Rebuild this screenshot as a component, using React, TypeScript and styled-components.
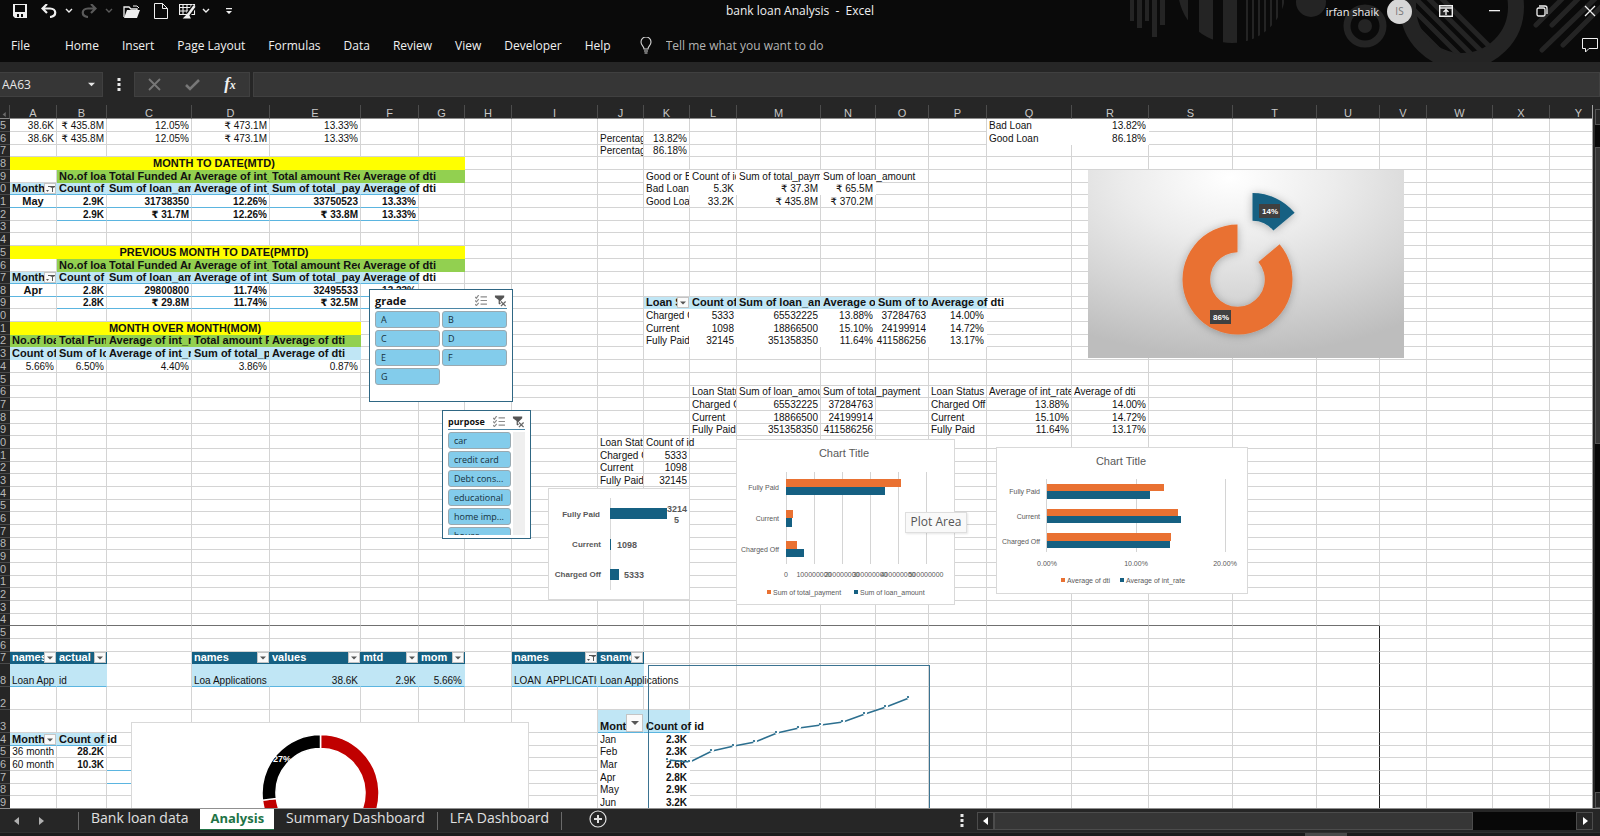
import React from "react";
import styled, { createGlobalStyle, css } from "styled-components";

const GlobalStyle = createGlobalStyle`
  * { box-sizing: border-box; }
  html, body, #root { height: 100%; }
  body { margin: 0; background: #262626; overflow: hidden; font-family: "Open Sans", "Noto Sans", sans-serif; }
  button, input { font: inherit; color: inherit; margin: 0; padding: 0; border: 0; background: none; }
`;

const teal = "#156082";
const orange = "#e97132";
const pale = "#c0e6f5";
const blueLine = "#5bb5e0";
const cellFont = '"Liberation Sans", "DejaVu Sans", sans-serif';

/* ---------- window chrome ---------- */

const Window = styled.div`
  display: flex;
  flex-direction: column;
  height: 100vh;
  overflow: hidden;
`;

const Ribbon = styled.header`
  position: relative;
  flex: none;
  height: 62px;
  background: #0a0a0a;
  color: #f0f0f0;
  font-size: 12px;
`;

const RibbonArt = styled.svg`
  position: absolute;
  top: 0;
  right: 0;
`;

const TitleBar = styled.div`
  position: relative;
  display: grid;
  grid-template-columns: 1fr auto 1fr;
  grid-template-rows: 22px;
  align-items: center;
  height: 22px;
`;

const QuickAccess = styled.div`
  display: flex;
  align-items: center;
  padding-left: 8px;
`;

const IconButton = styled.button<{ $w?: number; $dim?: boolean }>`
  display: flex;
  align-items: center;
  justify-content: center;
  flex: none;
  width: ${(p) => p.$w ?? 20}px;
  height: 20px;
  color: ${(p) => (p.$dim ? "#5a5a5a" : "#f0f0f0")};
  svg { display: block; flex: none; }
`;

const WindowTitle = styled.h1`
  margin: 0;
  font-size: 12px;
  line-height: 22px;
  font-weight: 400;
  white-space: pre;
`;

const AccountArea = styled.div`
  display: flex;
  align-items: center;
  justify-content: flex-end;
  white-space: nowrap;
`;

const UserName = styled.span`
  font-size: 11px;
  margin-right: 8px;
`;

const Avatar = styled.span`
  width: 25px;
  height: 25px;
  border-radius: 50%;
  background: #d6d6d6;
  color: #777;
  font-size: 10px;
  line-height: 25px;
  text-align: center;
  margin-right: 24px;
`;

const WindowButtons = styled.div`
  display: flex;
  align-items: center;
  gap: 28px;
`;

const MenuBar = styled.nav`
  position: relative;
  display: flex;
  align-items: center;
  gap: 23px;
  height: 40px;
  padding: 6px 0 0 11px;
`;

const MenuItem = styled.button<{ $wide?: boolean }>`
  margin-right: ${(p) => (p.$wide ? 12 : 0)}px;
  white-space: nowrap;
`;

const TellMe = styled.label`
  display: flex;
  align-items: center;
  gap: 14px;
  margin-left: 6px;
  flex: 1;
  input { width: 200px; outline: 0; }
  input::placeholder { color: #b4b4b4; opacity: 1; }
`;

const FormulaRow = styled.div`
  display: flex;
  flex: none;
  padding: 10px 0 8px;
  height: 43px;
  background: #262626;
  color: #e6e6e6;
`;

const NameBox = styled.div`
  display: flex;
  align-items: center;
  width: 103px;
  background: #363636;
  border: 1px solid #404040;
  border-left: 0;
  input { width: 88px; padding-left: 2px; font-size: 12px; outline: 0; }
  button { display: flex; }
`;

const FormulaDots = styled.div`
  display: flex;
  align-items: center;
  justify-content: center;
  width: 31px;
`;

const FormulaTools = styled.div`
  display: flex;
  align-items: center;
  justify-content: space-around;
  width: 116px;
  background: #363636;
  border: 1px solid #404040;
`;

const FormulaInput = styled.input`
  flex: 1;
  margin-left: 3px;
  background: #363636;
  border: 1px solid #404040;
  outline: 0;
`;

const FxMark = styled.span`
  font-family: "Liberation Serif", serif;
  font-style: italic;
  font-weight: 700;
  font-size: 17px;
  line-height: 18px;
  small { font-size: 12px; }
`;

/* ---------- worksheet ---------- */

const Workspace = styled.div`
  display: flex;
  flex: 1;
  min-height: 0;
  background: #262626;
`;

const Sheet = styled.main`
  position: relative;
  flex: 1;
  min-width: 0;
  overflow: hidden;
  background: #fff;
  border-right: 1px solid #a0a0a0;
`;

const Grid = styled.table`
  width: 100%;
  table-layout: fixed;
  border-collapse: separate;
  border-spacing: 0;
  font-family: ${cellFont};
  font-size: 10px;
  line-height: 11px;
  color: #111;
`;

const ColumnHead = styled.th`
  height: 14px;
  padding: 3px 0 0;
  background: #262626;
  border-right: 1px solid #4c4c4c;
  border-bottom: 1px solid #8a8a8a;
  color: #c8c8c8;
  font-weight: 400;
  font-size: 11px;
  line-height: 10px;
`;

const RowHead = styled.th`
  padding: 0;
  background: #262626;
  border-bottom: 1px solid #4a4a4a;
  color: #b8b8b8;
  font-weight: 400;
  font-size: 11px;
  line-height: 11px;
  text-align: left;
  vertical-align: bottom;
`;

const Row = styled.tr<{ $h: number }>`
  height: ${(p) => p.$h}px;
`;

type Look = {
  fill?: string;
  ink?: string;
  bold?: boolean;
  align?: "left" | "right" | "center";
  spill?: boolean;
  plain?: boolean;
  under?: string;
  side?: string;
};

const CellBox = styled.td<{ $look: Look }>`
  padding: 0 ${(p) => (p.$look.align === "right" ? 2 : 0)}px 0 ${(p) => (p.$look.align ? 0 : 2)}px;
  vertical-align: bottom;
  white-space: pre;
  text-align: ${(p) => p.$look.align ?? "left"};
  background: ${(p) => p.$look.fill ?? "transparent"};
  color: ${(p) => p.$look.ink ?? "inherit"};
  border-right: 1px solid ${(p) => p.$look.side ?? p.$look.fill ?? (p.$look.plain ? "#fff" : "#d4d4d4")};
  border-bottom: 1px solid ${(p) => p.$look.under ?? p.$look.fill ?? (p.$look.plain ? "#fff" : "#d4d4d4")};
  ${(p) => p.$look.bold && css`
    font-weight: 700;
    font-size: ${p.$look.align === "right" ? 10 : 11}px;
  `}
`;

const CellLine = styled.div`
  display: flex;
  align-items: flex-end;
`;

const CellText = styled.span<{ $spill?: boolean }>`
  display: block;
  flex: 1;
  min-width: 0;
  overflow-x: ${(p) => (p.$spill ? "visible" : "clip")};
`;

const FilterButton = styled.button<{ $big?: boolean }>`
  display: flex;
  align-items: center;
  justify-content: center;
  flex: none;
  width: ${(p) => (p.$big ? 17 : 12)}px;
  height: ${(p) => (p.$big ? 18 : 11)}px;
  background: #fafafa;
  border: 1px solid #c4c4c4;
`;

/* ---------- floating objects ---------- */

type Box = { $x: number; $y: number; $w: number; $h: number };

const Floating = styled.section<Box>`
  position: absolute;
  left: ${(p) => p.$x}px;
  top: ${(p) => p.$y}px;
  width: ${(p) => p.$w}px;
  height: ${(p) => p.$h}px;
`;

const ChartSvg = styled.svg`
  display: block;
  width: 100%;
  height: 100%;
  overflow: hidden;
  font-family: "Liberation Sans", sans-serif;
  fill: #595959;
`;

const SlicerFrame = styled(Floating)`
  display: flex;
  flex-direction: column;
  padding: 3px 5px;
  background: #fff;
  border: 1px solid #2f6784;
  color: #111;
`;

const SlicerHead = styled.div<{ $compact?: boolean }>`
  display: flex;
  align-items: center;
  justify-content: space-between;
  flex: none;
  height: 16px;
  border-bottom: 1px solid #4b86a6;
  h2 { margin: 0; font-size: ${(p) => (p.$compact ? 9 : 11)}px; line-height: 12px; font-weight: 700; }
  div { display: flex; gap: 7px; }
  button { display: flex; }
`;

const SlicerBody = styled.div`
  display: flex;
  flex: 1;
  min-height: 0;
  gap: 2px;
  padding-top: 2px;
`;

const SlicerList = styled.div<{ $cols: number }>`
  display: grid;
  grid-template-columns: repeat(${(p) => p.$cols}, 1fr);
  grid-auto-rows: 17px;
  align-content: start;
  gap: 2px;
  flex: 1;
  overflow: hidden;
`;

const SlicerItem = styled.button`
  padding: 0 5px;
  border: 1px solid #9aa9b0;
  border-radius: 3px;
  background: #83cceb;
  font-size: 9px;
  line-height: 13px;
  text-align: left;
  white-space: nowrap;
  color: #16313d;
`;

const SlicerTrack = styled.div`
  flex: none;
  width: 12px;
  background: #efefef;
`;

const Tooltip = styled(Floating)`
  background: #f9f9f9;
  border: 1px solid #dedede;
  color: #555;
  font-size: 12px;
  line-height: 18px;
  text-align: center;
  white-space: nowrap;
  box-shadow: 1px 1px 2px rgba(0, 0, 0, 0.1);
`;

/* ---------- scroll bars and sheet tabs ---------- */

const VerticalScroll = styled.div`
  display: flex;
  flex-direction: column;
  flex: none;
  width: 7px;
  padding: 4px 0 0 2px;
  background: #262626;
`;

const VButton = styled.button`
  flex: none;
  height: 16px;
  background: #262626;
  border: 1px solid #555;
  border-right: 0;
`;

const VTrack = styled.div`
  flex: 1;
  padding-top: 22px;
  background: #080808;
`;

const VThumb = styled.div`
  height: 46%;
  background: #363636;
  border: 1px solid #555;
  border-right: 0;
`;

const BottomBar = styled.footer`
  display: flex;
  flex: none;
  height: 24px;
  border-top: 1px solid #909090;
  background: #262626;
  color: #e0e0e0;
`;

const TabArrows = styled.div`
  display: flex;
  align-items: center;
  gap: 4px;
  width: 78px;
  padding-left: 7px;
`;

const Divider = styled.span<{ $right?: number }>`
  flex: none;
  width: 1px;
  height: 18px;
  margin: 3px ${(p) => p.$right ?? 0}px 0 0;
  background: #6a6a6a;
`;

const SheetTab = styled.button<{ $active?: boolean }>`
  height: 21px;
  padding: 0 12px 4px;
  font-size: 14px;
  line-height: 16px;
  white-space: nowrap;
  ${(p) => p.$active && css`
    padding: 0 10px 3px;
    background: #fff;
    color: #217346;
    font-size: 13px;
    font-weight: 700;
    border-bottom: 1px solid #217346;
  `}
`;

const HScroll = styled.div`
  display: flex;
  width: 616px;
  height: 18px;
  margin: 3px 7px 0 0;
  background: #080808;
  flex: none;
`;

const HButton = styled.button`
  display: flex;
  align-items: center;
  justify-content: center;
  flex: none;
  width: 17px;
  background: #262626;
  border: 1px solid #4c4c4c;
`;

const HThumb = styled.div`
  width: 479px;
  background: #363636;
  border: 1px solid #4c4c4c;
`;

const Spacer = styled.span`
  flex: 1;
`;

const StatusEdge = styled.div`
  display: flex;
  flex: none;
  height: 4px;
  background: #1c1c1c;
  border-top: 1px solid #303030;
  justify-content: flex-end;
  padding-right: 253px;
`;

const StatusMark = styled.span`
  width: 42px;
  background: #4a4a4a;
`;

/* ---------- data ---------- */

const columns: [string, number?][] = [
  ["A", 47], ["B", 50], ["C", 85], ["D", 78], ["E", 91], ["F", 58], ["G", 46], ["H", 47], ["I", 86],
  ["J", 46], ["K", 46], ["L", 47], ["M", 84], ["N", 55], ["O", 53], ["P", 58], ["Q", 85], ["R", 77],
  ["S", 84], ["T", 84], ["U", 63], ["V", 47], ["W", 66], ["X", 57], ["Y", 58], ["Z"],
];
const letters = columns.map((c) => c[0]);

const rowHeights = [
  13, 13, 12, 13, 13, 12, 13, 13, 12, 13, 13, 13, 12, 13, 12, 13, 13, 12, 13, 13, 13, 12, 13, 13, 12, 13,
  13, 12, 13, 13, 12, 13, 13, 12, 13, 13, 12, 13, 13, 12, 13, 13, 12, 23, 23, 23, 13, 12, 13, 13, 12, 13,
];
const rowDigits = "5678901234567890123456789012345678901234567823456789";

type Cell = Look & { value?: string; span?: number; filter?: "list" | "funnel"; big?: boolean };
const cells: Record<string, Cell> = {};

function put(row: number, start: string, values: string[], look: Cell = {}) {
  const first = letters.indexOf(start);
  values.forEach((value, i) => {
    const key = `${letters[first + i]}${row}`;
    cells[key] = { ...cells[key], ...look, value };
  });
}
function shade(row: number, from: string, to: string, look: Cell) {
  for (let c = letters.indexOf(from); c <= letters.indexOf(to); c++) {
    const key = `${letters[c]}${row}`;
    cells[key] = { ...cells[key], ...look };
  }
}
const num: Cell = { align: "right" };
const boldNum: Cell = { align: "right", bold: true };
const yellow = "#ffff00";
const green = "#92d050";

put(0, "A", ["38.6K", "₹ 435.8M", "12.05%", "₹ 473.1M", "13.33%"], num);
put(1, "A", ["38.6K", "₹ 435.8M", "12.05%", "₹ 473.1M", "13.33%"], num);

function monthBlock(top: number, title: string, month: string, first: string[], second: string[]) {
  put(top, "A", [title], { span: 6, bold: true, align: "center", fill: yellow });
  shade(top, "G", "G", { fill: yellow });
  put(top + 1, "B", ["No.of loan", "Total Funded Amount", "Average of int_rate", "Total amount Received", "Average of dti"], { bold: true });
  shade(top + 1, "B", "G", { fill: green });
  put(top + 2, "A", ["Month", "Count of id", "Sum of loan_amount", "Average of int_rate", "Sum of total_payment", "Average of dti"], { bold: true });
  shade(top + 2, "A", "F", { fill: pale, under: blueLine });
  cells[`A${top + 2}`].filter = "funnel";
  cells[`F${top + 1}`].spill = true;
  cells[`F${top + 2}`].spill = true;
  put(top + 3, "A", [month], { bold: true, align: "center" });
  put(top + 3, "B", first, boldNum);
  shade(top + 3, "A", "F", { under: blueLine });
  put(top + 4, "B", second, boldNum);
  shade(top + 4, "B", "F", { under: blueLine });
}
monthBlock(3, "MONTH TO DATE(MTD)", "May", ["2.9K", "31738350", "12.26%", "33750523", "13.33%"], ["2.9K", "₹ 31.7M", "12.26%", "₹ 33.8M", "13.33%"]);
monthBlock(10, "PREVIOUS MONTH TO DATE(PMTD)", "Apr", ["2.8K", "29800800", "11.74%", "32495533", "13.23%"], ["2.8K", "₹ 29.8M", "11.74%", "₹ 32.5M", ""]);

put(16, "A", ["MONTH OVER MONTH(MOM)"], { span: 5, bold: true, align: "center", fill: yellow });
put(17, "A", ["No.of loan", "Total Funded", "Average of int_rate", "Total amount Received", "Average of dti"], { bold: true, fill: green });
put(18, "A", ["Count of id", "Sum of loan", "Average of int_rate", "Sum of total_payment", "Average of dti"], { bold: true, fill: pale });
put(19, "A", ["5.66%", "6.50%", "4.40%", "3.86%", "0.87%"], num);

put(1, "J", ["Percentage"]);
put(1, "K", ["13.82%"], num);
put(2, "J", ["Percentage"]);
put(2, "K", ["86.18%"], num);
put(0, "Q", ["Bad Loan"], { plain: true });
put(0, "R", ["13.82%"], { ...num, plain: true });
put(1, "Q", ["Good Loan"], { plain: true });
put(1, "R", ["86.18%"], { ...num, plain: true });
put(4, "K", ["Good or Bad", "Count of id", "Sum of total_payment"]);
put(4, "N", ["Sum of loan_amount"], { spill: true });
put(5, "K", ["Bad Loan"]);
put(5, "L", ["5.3K", "₹ 37.3M", "₹ 65.5M"], num);
put(6, "K", ["Good Loan"]);
put(6, "L", ["33.2K", "₹ 435.8M", "₹ 370.2M"], num);
[4, 5].forEach((r) => shade(r, "K", "N", { plain: true }));

put(14, "K", ["Loan Status", "Count of id", "Sum of loan_amount", "Average of int", "Sum of total", "Average of dti"], { bold: true, fill: pale });
cells.K14.filter = "list";
cells.P14.spill = true;
const status = ["Charged Off", "Current", "Fully Paid"];
const counts = ["5333", "1098", "32145"];
const funded = ["65532225", "18866500", "351358350"];
const received = ["37284763", "24199914", "411586256"];
const rates = ["13.88%", "15.10%", "11.64%"];
const dti = ["14.00%", "14.72%", "13.17%"];
status.forEach((s, i) => {
  put(15 + i, "K", [s], { plain: true });
  put(15 + i, "L", [counts[i], funded[i], rates[i], received[i], dti[i]], { ...num, plain: true });
  put(22 + i, "L", [s]);
  put(22 + i, "M", [funded[i], received[i]], num);
  put(22 + i, "P", [s]);
  put(22 + i, "Q", [rates[i], dti[i]], num);
  put(26 + i, "J", [s]);
  put(26 + i, "K", [counts[i]], num);
});
put(21, "L", ["Loan Status", "Sum of loan_amount"]);
put(21, "N", ["Sum of total_payment"], { spill: true });
put(21, "P", ["Loan Status", "Average of int_rate", "Average of dti"]);
put(25, "J", ["Loan Status"]);
put(25, "K", ["Count of id"], { spill: true });

shade(39, "A", "U", { under: "#707070" });
for (let r = 40; r < rowHeights.length; r++) shade(r, "U", "U", { side: "#222" });

const head: Cell = { bold: true, fill: teal, ink: "#fff", filter: "list" };
put(42, "A", ["names", "actual"], head);
put(42, "D", ["names", "values", "mtd", "mom"], head);
put(42, "I", ["names", "sname"], head);
cells.I42.filter = "funnel";
const band: Cell = { fill: pale, under: blueLine };
put(43, "A", ["Loan App", "id"], band);
put(43, "D", ["Loa Applications"], band);
put(43, "E", ["38.6K", "2.9K", "5.66%"], { ...num, ...band });
put(43, "I", ["LOAN  APPLICATIONS"], band);
put(43, "J", ["Loan Applications"], { ...band, spill: true });

put(45, "J", ["Month"], { bold: true, fill: pale, under: blueLine, filter: "list", big: true });
put(45, "K", ["Count of id"], { bold: true, fill: pale, under: blueLine, spill: true });
put(46, "A", ["Month"], { bold: true, fill: pale, under: blueLine, filter: "list" });
put(46, "B", ["Count of id"], { bold: true, fill: pale, under: blueLine, spill: true });
put(47, "A", ["36 month"], num);
put(47, "B", ["28.2K"], boldNum);
put(48, "A", ["60 month"], num);
put(48, "B", ["10.3K"], boldNum);
shade(48, "C", "C", { under: blueLine });
shade(49, "C", "C", { under: blueLine });
["Jan", "Feb", "Mar", "Apr", "May", "Jun"].forEach((m, i) => {
  put(46 + i, "J", [m], { plain: true });
  put(46 + i, "K", [["2.3K", "2.3K", "2.6K", "2.8K", "2.9K", "3.2K"][i]], { ...boldNum, plain: true });
});

/* ---------- small drawings ---------- */

const Chevron = () => (
  <svg width="8" height="6" viewBox="0 0 8 6" fill="none" stroke="currentColor" strokeWidth="1.4"><path d="M1 1l3 3 3-3" /></svg>
);
const Triangle = ({ dir = "down", size = 8, color = "currentColor" }: { dir?: string; size?: number; color?: string }) => {
  const d: Record<string, string> = { down: "M0 2h8l-4 4z", left: "M6 0v8l-5-4z", right: "M2 0v8l5-4z" };
  return <svg width={size} height={size} viewBox="0 0 8 8" fill={color}><path d={d[dir]} /></svg>;
};
const Dots = () => (
  <svg width="4" height="13" viewBox="0 0 4 13" fill="#e8e8e8"><path d="M.5 0h3v3h-3zM.5 5h3v3h-3zM.5 10h3v3h-3z" /></svg>
);
const FunnelMark = () => (
  <svg width="9" height="8" viewBox="0 0 9 8" fill="#555"><path d="M2 1h7v1L7 3v4H6V3L4 2H2zM0 5h3L1.500 7z" /></svg>
);
const MultiSelect = () => (
  <svg width="12" height="11" viewBox="0 0 13 12" fill="none" stroke="#8c8c8c" strokeWidth="1.300"><path d="M6 2h7M6 6h7M6 10h7M0 2l1.500 1.500L4 0M0 6l1.500 1.500L4 4.500M0 10l1.500 1.500L4 8.500" /></svg>
);
const ClearFilter = () => (
  <svg width="13" height="12" viewBox="0 0 14 12"><path d="M1 0h10v2L8 5v6L5 9V5L1 2z" fill="#555" /><path d="M7 6l5 5M12 6l-5 5" stroke="#fff" strokeWidth="3" /><path d="M7.500 6.500l5 5M12.500 6.500l-5 5" stroke="#666" strokeWidth="1.400" /></svg>
);

function Art() {
  const c = "#242424";
  return (
    <RibbonArt width="480" height="62" viewBox="1120 0 480 62" fill={c} aria-hidden="true">
      <defs>
        <clipPath id="disc"><circle cx="1232" cy="-11" r="54" /></clipPath>
        <clipPath id="ring"><circle cx="1462" cy="7" r="47" /></clipPath>
      </defs>
      <path d="M1130 0h4v21h-4zM1137 0h5v28h-5zM1145 0h4v21h-4zM1152 0h5v37h-5zM1160 0h5v25h-5z" />
      <path clipPath="url(#disc)" d="M1176 0h12v30h-12zM1199 0h14v50h-14zM1223 0h14v50h-14zM1246 0h2v50h-2zM1252 0h2v50h-2zM1258 0h2v50h-2zM1264 0h2v50h-2zM1270 0h2v50h-2zM1276 0h2v50h-2zM1282 0h2v50h-2z" />
      <circle cx="1311" cy="2" r="15" />
      <circle cx="1365" cy="26" r="18" fill="none" stroke={c} strokeWidth="7" />
      <circle cx="1365" cy="26" r="7" />
      <circle cx="1462" cy="7" r="54" fill="none" stroke={c} strokeWidth="16" />
      <g clipPath="url(#ring)" stroke={c} strokeWidth="5">
        <path d="M1405 16l60 60M1410 6l60 60M1412 -5l70 70M1418 -12l72 72M1428 -15l72 72" />
      </g>
      <g stroke={c} strokeWidth="5" strokeLinecap="round">
        <path d="M1536 25l28-28M1552 25l28-28M1542 50l58-56M1563 45l40-40" />
      </g>
    </RibbonArt>
  );
}

function arc(cx: number, cy: number, R: number, r: number, a0: number, a1: number) {
  const p = (rad: number, a: number) => {
    const t = (a * Math.PI) / 180;
    return `${(cx + rad * Math.sin(t)).toFixed(2)} ${(cy - rad * Math.cos(t)).toFixed(2)}`;
  };
  const big = a1 - a0 > 180 ? 1 : 0;
  return `M${p(R, a0)}A${R} ${R} 0 ${big} 1 ${p(R, a1)}L${p(r, a1)}A${r} ${r} 0 ${big} 0 ${p(r, a0)}Z`;
}

/* Charts draw in window coordinates; the sheet begins below the 105px of bars. */
function Chart({ x, y, w, h, name, children }: { x: number; y: number; w: number; h: number; name: string; children: React.ReactNode }) {
  return (
    <Floating $x={x} $y={y - 105} $w={w} $h={h} aria-label={name}>
      <ChartSvg viewBox={`${x} ${y} ${w} ${h}`}>{children}</ChartSvg>
    </Floating>
  );
}
const Frame = ({ x, y, w, h }: { x: number; y: number; w: number; h: number }) => (
  <rect x={x + 0.5} y={y + 0.5} width={w - 1} height={h - 1} fill="#fff" stroke="#d9d9d9" />
);

function Slicer({ title, items, cols, box, scroll }: { title: string; items: string[]; cols: number; box: Box; scroll?: boolean }) {
  return (
    <SlicerFrame {...box}>
      <SlicerHead $compact={scroll}>
        <h2>{title}</h2>
        <div>
          <button aria-label="Multi-select"><MultiSelect /></button>
          <button aria-label="Clear filter"><ClearFilter /></button>
        </div>
      </SlicerHead>
      <SlicerBody>
        <SlicerList $cols={cols}>{items.map((i) => <SlicerItem key={i}>{i}</SlicerItem>)}</SlicerList>
        {scroll && <SlicerTrack />}
      </SlicerBody>
    </SlicerFrame>
  );
}

function GridRow({ index }: { index: number }) {
  const out: React.ReactNode[] = [];
  for (let c = 0; c < letters.length; c++) {
    const cell = cells[`${letters[c]}${index}`] ?? {};
    const { value, span, filter, big, ...look } = cell;
    out.push(
      <CellBox key={c} colSpan={span} $look={look}>
        {value !== undefined && (
          <CellLine>
            <CellText $spill={look.spill}>{value}</CellText>
            {filter && (
              <FilterButton $big={big} aria-label="Filter">
                {filter === "funnel" ? <FunnelMark /> : <Triangle size={big ? 8 : 6} color="#555" />}
              </FilterButton>
            )}
          </CellLine>
        )}
      </CellBox>
    );
    if (span) c += span - 1;
  }
  return <Row $h={rowHeights[index]}><RowHead scope="row">{rowDigits[index]}</RowHead>{out}</Row>;
}

const trend = [
  [668, 760], [690, 762], [712, 751], [734, 746], [755, 742], [777, 733],
  [799, 728], [821, 725], [843, 722], [865, 714], [886, 707], [909, 698],
];

function Charts() {
  return (
    <>
      <Chart x={1088} y={170} w={316} h={188} name="Good and bad loans">
        <defs>
          <radialGradient id="studio" cx="0.45" cy="0.04" r="0.95">
            <stop offset="0" stopColor="#fff" />
            <stop offset="0.35" stopColor="#ececec" />
            <stop offset="0.7" stopColor="#d4d4d4" />
            <stop offset="1" stopColor="#bdbdbd" />
          </radialGradient>
          <filter id="lift" x="-20%" y="-20%" width="140%" height="140%">
            <feDropShadow dx="0" dy="1" stdDeviation="4" floodOpacity="0.28" />
          </filter>
        </defs>
        <rect x="1088" y="170" width="316" height="188" fill="url(#studio)" />
        <g filter="url(#lift)">
          <path d={arc(1237.5, 279.5, 55, 27.3, 50, 360)} fill={orange} />
          <path d={arc(1252.5, 248, 55, 27.3, 0, 50)} fill={teal} />
        </g>
        <rect x="1259" y="204" width="21" height="14" fill="#404040" />
        <rect x="1210" y="310" width="21" height="14" fill="#404040" />
        <g fill="#fff" fontSize="8" fontWeight="700" textAnchor="middle">
          <text x="1270" y="214">14%</text>
          <text x="1221" y="320">86%</text>
        </g>
      </Chart>

      <Chart x={548} y={488} w={142} h={112} name="Count by loan status">
        <Frame x={548} y={488} w={142} h={112} />
        <path d="M610.500 498v92" stroke="#d9d9d9" />
        <path d="M610 508h57v11h-57zM610 539h1v11h-1zM610 569h9v11h-9z" fill={teal} />
        <g fontSize="8" fontWeight="700" textAnchor="end">
          <text x="600" y="517">Fully Paid</text>
          <text x="601" y="547">Current</text>
          <text x="601" y="577">Charged Off</text>
        </g>
        <g fontSize="9" fontWeight="700">
          <text x="667" y="512">3214</text>
          <text x="674" y="523">5</text>
          <text x="617" y="548">1098</text>
          <text x="624" y="578">5333</text>
        </g>
      </Chart>

      <Chart x={736} y={439} w={219} h={166} name="Payments and loan amounts">
        <Frame x={736} y={439} w={219} h={166} />
        <path d="M786.500 472v92M814.500 472v92M842.500 472v92M870.500 472v92M898.500 472v92M926.500 472v92" stroke="#d4d4d4" />
        <path d="M786 479h115v8h-115zM786 510h7v8h-7zM786 541h11v8h-11z" fill={orange} />
        <path d="M786 487h99v8h-99zM786 518h6v9h-6zM786 549h18v8h-18z" fill={teal} />
        <text x="844" y="457" fontSize="11" textAnchor="middle">Chart Title</text>
        <g fontSize="7">
          <g textAnchor="end">
            <text x="779" y="490">Fully Paid</text>
            <text x="779" y="521">Current</text>
            <text x="779" y="552">Charged Off</text>
          </g>
          <g textAnchor="middle">
            {["0", "100000000", "200000000", "300000000", "400000000", "500000000"].map((t, i) => (
              <text key={t} x={786 + i * 28} y="577">{t}</text>
            ))}
          </g>
          <rect x="767" y="590" width="4" height="4" fill={orange} />
          <text x="773" y="595">Sum of total_payment</text>
          <rect x="854" y="590" width="4" height="4" fill={teal} />
          <text x="860" y="595">Sum of loan_amount</text>
        </g>
      </Chart>

      <Chart x={996} y={447} w={252} h={147} name="Interest rate and dti">
        <Frame x={996} y={447} w={252} h={147} />
        <path d="M1046.500 479v73M1136.500 479v73M1225.500 479v73" stroke="#d4d4d4" />
        <path d="M1047 484h117v7h-117zM1047 509h131v7h-131zM1047 533h124v8h-124z" fill={orange} />
        <path d="M1047 491h103v8h-103zM1047 516h134v7h-134zM1047 541h123v7h-123z" fill={teal} />
        <text x="1121" y="465" fontSize="11" textAnchor="middle">Chart Title</text>
        <g fontSize="7">
          <g textAnchor="end">
            <text x="1040" y="494">Fully Paid</text>
            <text x="1040" y="519">Current</text>
            <text x="1040" y="544">Charged Off</text>
          </g>
          <g textAnchor="middle">
            <text x="1047" y="566">0.00%</text>
            <text x="1136" y="566">10.00%</text>
            <text x="1225" y="566">20.00%</text>
          </g>
          <rect x="1061" y="578" width="4" height="4" fill={orange} />
          <text x="1067" y="583">Average of dti</text>
          <rect x="1120" y="578" width="4" height="4" fill={teal} />
          <text x="1126" y="583">Average of int_rate</text>
        </g>
      </Chart>

      <Chart x={131} y={722} w={398} h={160} name="Loans by term">
        <Frame x={131} y={722} w={398} h={160} />
        <g stroke="#fff" strokeWidth="1.5">
          <path d={arc(320.5, 793, 58.5, 44.5, 0, 263)} fill="#c00000" />
          <path d={arc(320.5, 793, 58.5, 44.5, 263, 360)} fill="#000" />
        </g>
        <text x="282" y="762" fontSize="9" fontWeight="700" textAnchor="middle" fill="#fff">27%</text>
      </Chart>

      <Chart x={648} y={665} w={282} h={200} name="Monthly trend">
        <rect x="648.5" y="665.5" width="281" height="199" fill="none" stroke="#3b7391" />
        <polyline points={trend.map((p) => p.join(",")).join(" ")} fill="none" stroke="#2c6f8f" strokeWidth="1.6" />
        {trend.map(([x, y]) => (
          <g key={x}>
            <circle cx={x} cy={y - 1} r="2.2" fill="#fff" />
            <circle cx={x - 1} cy={y - 1} r="1.1" fill={teal} />
          </g>
        ))}
      </Chart>
    </>
  );
}

export default function App() {
  return (
    <Window>
      <GlobalStyle />
      <Ribbon>
        <Art />
        <TitleBar>
          <QuickAccess>
            <IconButton $w={24} aria-label="Save"><svg width="14" height="14" viewBox="0 0 14 14"><path d="M0 0h14v14H2l-2-2z" fill="#f0f0f0" /><path d="M2 1h10v7H2zM4 10h2v3H4zM8 10h2v3H8z" fill="#0a0a0a" /></svg></IconButton>
            <IconButton $w={34} aria-label="Undo"><svg width="16" height="14" viewBox="0 0 16 14" fill="none" stroke="currentColor" strokeWidth="2.200"><path d="M6 0L1.500 4.500 6 9M2 4.500h7c7 0 7 8 0 8.500" /></svg></IconButton>
            <IconButton $w={6} aria-label="Undo list"><Chevron /></IconButton>
            <IconButton $w={34} $dim aria-label="Redo"><svg width="16" height="14" viewBox="0 0 16 14" fill="none" stroke="currentColor" strokeWidth="2.200"><path d="M10 0l4.500 4.500L10 9M14 4.500H7c-7 0-7 8 0 8.500" /></svg></IconButton>
            <IconButton $w={6} $dim aria-label="Redo list"><Chevron /></IconButton>
            <IconButton $w={38} aria-label="Open"><svg width="17" height="13" viewBox="0 0 17 13"><path d="M1 12V2h5l2 2h6v2" fill="none" stroke="#f0f0f0" strokeWidth="1.300" /><path d="M4 5h13l-3 8H1z" fill="#f0f0f0" /><path d="M10 1h4l2 2" fill="none" stroke="#f0f0f0" /></svg></IconButton>
            <IconButton $w={22} aria-label="New"><svg width="14" height="16" viewBox="0 0 14 16" fill="none" stroke="currentColor"><path d="M.5 .5h8l5 5v10H.5zM8.500 .5v5h5" /></svg></IconButton>
            <IconButton $w={30} aria-label="Format table"><svg width="17" height="16" viewBox="0 0 17 16" fill="none" stroke="currentColor" strokeWidth="1.100"><path d="M.5 1.500h15v10H.5zM.5 4.500h15M.5 8h9M4 1.500v10M8 1.500v10M12 1.500v5" /><path d="M15.500 3L9 12" stroke="#0a0a0a" strokeWidth="5" /><path d="M15.500 3L9 12" strokeWidth="2.500" /><path d="M9 11l-4 4h6z" fill="currentColor" /></svg></IconButton>
            <IconButton $w={8} aria-label="Table list"><Chevron /></IconButton>
            <IconButton $w={38} aria-label="Customize toolbar"><svg width="6" height="7" viewBox="0 0 6 7" fill="currentColor"><path d="M0 0h6v1.300H0zM0 3h6L3 6z" /></svg></IconButton>
          </QuickAccess>
          <WindowTitle>bank loan Analysis  -  Excel</WindowTitle>
          <AccountArea>
            <UserName>irfan shaik</UserName>
            <Avatar>IS</Avatar>
            <WindowButtons>
              <IconButton aria-label="Ribbon display"><svg width="14" height="12" viewBox="0 0 14 12" fill="none" stroke="currentColor" strokeWidth="1.400"><path d="M.7 .7h12.600v10.600H.7zM.7 3h12.600M7 10V5M4.500 7L7 4.500 9.500 7" /></svg></IconButton>
              <IconButton aria-label="Minimize"><svg width="11" height="4" viewBox="0 0 11 4"><path d="M0 1h11v1.300H0z" fill="currentColor" /></svg></IconButton>
              <IconButton aria-label="Restore"><svg width="12" height="12" viewBox="0 0 12 12" fill="none" stroke="currentColor" strokeWidth="1.300"><rect x="1" y="3" width="8" height="8" rx="1.500" /><path d="M3 1h6q2 0 2 2v6" /></svg></IconButton>
              <IconButton aria-label="Close"><svg width="12" height="12" viewBox="0 0 12 12" stroke="currentColor" strokeWidth="1.300"><path d="M1 1l10 10M11 1L1 11" /></svg></IconButton>
            </WindowButtons>
          </AccountArea>
        </TitleBar>
        <MenuBar>
          <MenuItem $wide>File</MenuItem>
          {["Home", "Insert", "Page Layout", "Formulas", "Data", "Review", "View", "Developer", "Help"].map((m) => <MenuItem key={m}>{m}</MenuItem>)}
          <TellMe>
            <svg width="12" height="17" viewBox="0 0 12 17" fill="none" stroke="#d8d8d8" strokeWidth="1.100"><path d="M4 12c0-3-3-3.500-3-7a5 5 0 0 1 10 0c0 3.500-3 4-3 7zM4 14h4M4.500 16h3" /></svg>
            <input aria-label="Tell me what you want to do" placeholder="Tell me what you want to do" />
          </TellMe>
          <IconButton aria-label="Comments"><svg width="16" height="15" viewBox="0 0 16 15" fill="none" stroke="currentColor"><path d="M.5 .5h15v10H7l-3.500 3.500v-3.500h-3z" /></svg></IconButton>
        </MenuBar>
      </Ribbon>

      <FormulaRow>
        <NameBox><input aria-label="Name box" defaultValue="AA63" /><button aria-label="Name list"><Triangle size={7} /></button></NameBox>
        <FormulaDots><Dots /></FormulaDots>
        <FormulaTools>
          <IconButton $dim aria-label="Cancel"><svg width="13" height="13" viewBox="0 0 13 13" stroke="#777" strokeWidth="1.800"><path d="M1 1l11 11M12 1L1 12" /></svg></IconButton>
          <IconButton $dim aria-label="Enter"><svg width="15" height="12" viewBox="0 0 15 12" fill="none" stroke="#777" strokeWidth="2.600"><path d="M1 6l4 4 9-9" /></svg></IconButton>
          <IconButton aria-label="Insert function"><FxMark>f<small>x</small></FxMark></IconButton>
        </FormulaTools>
        <FormulaInput aria-label="Formula" />
      </FormulaRow>

      <Workspace>
        <Sheet>
          <Grid>
            <colgroup>
              <col style={{ width: 10 }} />
              {columns.map(([n, w]) => <col key={n} style={w ? { width: w } : undefined} />)}
            </colgroup>
            <thead>
              <tr>
                <ColumnHead aria-label="Select all"><Triangle dir="left" size={5} color="#6a6a6a" /></ColumnHead>
                {letters.map((l) => <ColumnHead key={l} scope="col">{l === "Z" ? "" : l}</ColumnHead>)}
              </tr>
            </thead>
            <tbody>{rowHeights.map((_, i) => <GridRow key={i} index={i} />)}</tbody>
          </Grid>
          <Charts />
          <Slicer title="grade" cols={2} items={["A", "B", "C", "D", "E", "F", "G"]} box={{ $x: 369, $y: 184, $w: 144, $h: 113 }} />
          <Slicer title="purpose" cols={1} scroll items={["car", "credit card", "Debt cons...", "educational", "home imp...", "house"]} box={{ $x: 442, $y: 305, $w: 89, $h: 129 }} />
          <Tooltip role="tooltip" $x={905} $y={407} $w={62} $h={21}>Plot Area</Tooltip>
        </Sheet>
        <VerticalScroll>
          <VButton aria-label="Scroll up" />
          <VTrack><VThumb /></VTrack>
          <VButton aria-label="Scroll down" />
        </VerticalScroll>
      </Workspace>

      <BottomBar>
        <TabArrows>
          <IconButton aria-label="Previous sheet"><Triangle dir="left" color="#b0b0b0" /></IconButton>
          <IconButton aria-label="Next sheet"><Triangle dir="right" color="#b0b0b0" /></IconButton>
        </TabArrows>
        <Divider />
        <SheetTab>Bank loan data</SheetTab>
        <SheetTab $active>Analysis</SheetTab>
        <SheetTab>Summary Dashboard</SheetTab>
        <Divider />
        <SheetTab>LFA Dashboard</SheetTab>
        <Divider $right={26} />
        <IconButton aria-label="New sheet"><svg width="18" height="18" viewBox="0 0 18 18" fill="none" stroke="#e0e0e0"><circle cx="9" cy="9" r="8" strokeWidth="1.200" /><path d="M9 5v8M5 9h8" strokeWidth="2" /></svg></IconButton>
        <Spacer />
        <FormulaDots><Dots /></FormulaDots>
        <HScroll>
          <HButton aria-label="Scroll left"><Triangle dir="left" color="#fff" /></HButton>
          <HThumb />
          <Spacer />
          <HButton aria-label="Scroll right"><Triangle dir="right" color="#fff" /></HButton>
        </HScroll>
      </BottomBar>
      <StatusEdge><StatusMark /></StatusEdge>
    </Window>
  );
}
